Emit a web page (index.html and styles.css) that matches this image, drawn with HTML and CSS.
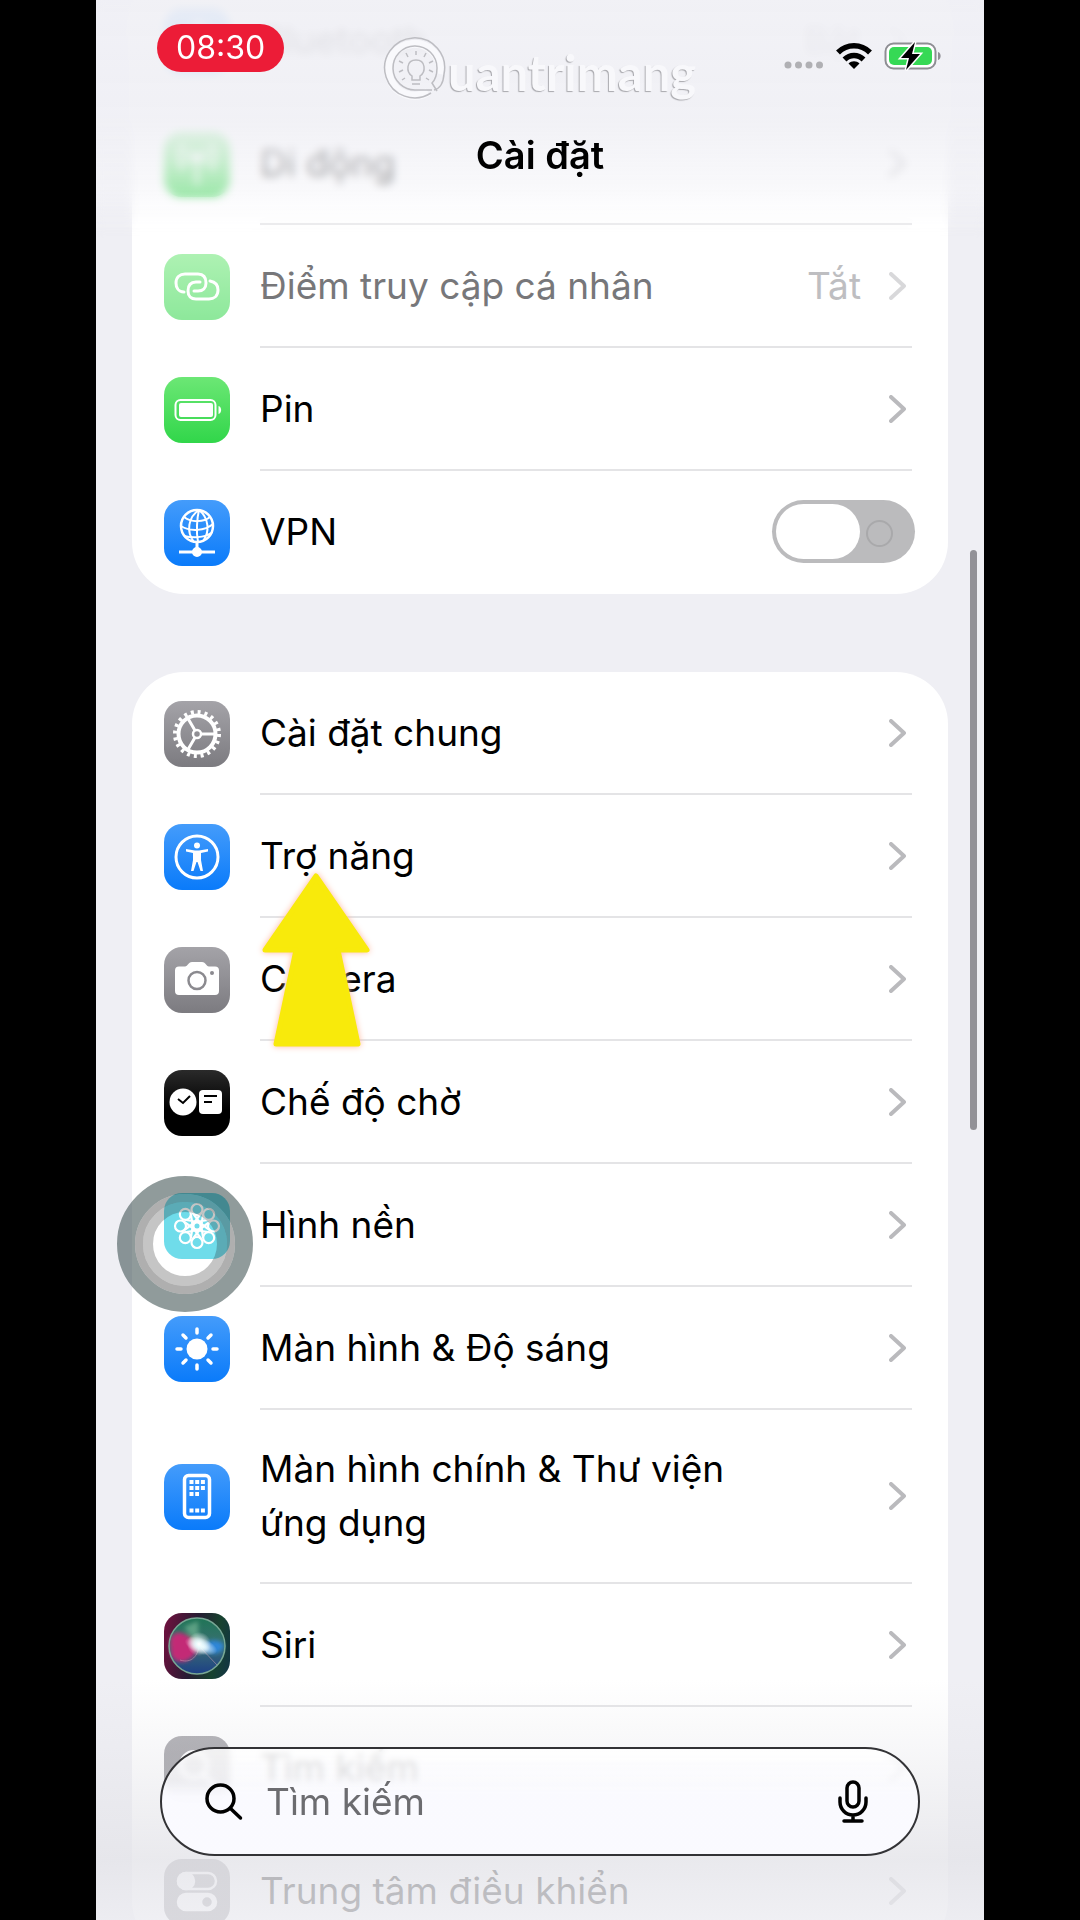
FILE: index.html
```html
<!DOCTYPE html>
<html lang="vi">
<head>
	<meta charset="utf-8">
	<meta name="viewport" content="width=device-width, initial-scale=1.0">
	<title>Cài đặt</title>
	<link rel="stylesheet" href="styles.css">
</head>
<body>
	<!-- shared shapes -->
	<svg class="defs" width="0" height="0" aria-hidden="true">
		<symbol id="chevron" viewBox="0 0 17 28">
			<path d="M2 2 L15 14 L2 26" fill="none" stroke="currentColor" stroke-width="4" stroke-linecap="round" stroke-linejoin="round"/>
		</symbol>
		<symbol id="petal" viewBox="0 0 66 66">
			<g fill="none" stroke="#fff" stroke-width="2.200" stroke-linecap="round"><circle cx="33" cy="16.500" r="5.500"/><path d="M29.500 21 L36 30 M36.500 21 L30 30"/></g>
		</symbol>
	</svg>

	<div class="screen">
		<header class="header">
			<div class="status-bar">
				<div class="time">08:30</div>
				<div class="status-icons">
					<svg class="dots" viewBox="0 0 40 8" fill="#b0b0b4"><circle cx="4" cy="4" r="3.500"/><circle cx="14.500" cy="4" r="3.500"/><circle cx="25" cy="4" r="3.500"/><circle cx="35.500" cy="4" r="3.500"/></svg>
					<svg class="wifi" viewBox="0 0 36 28">
						<g fill="none" stroke="#000" stroke-width="5.500">
							<path d="M2 10.500 C11 1.500 25 1.500 34 10.500"/>
							<path d="M8.500 17.500 C14 12 22 12 27.500 17.500"/>
						</g>
						<path d="M18 27 L12.500 21.500 C15.500 18.500 20.500 18.500 23.500 21.500 Z"/>
					</svg>
					<svg class="battery" viewBox="0 0 58 30">
						<rect x="1.500" y="2.500" width="50" height="25" rx="8" fill="#fff" stroke="#8e8e93" stroke-width="2"/>
						<rect x="5" y="6" width="43" height="18" rx="5" fill="#36d955"/>
						<path d="M54 11 C57.500 12 57.500 18 54 19 Z" fill="#8e8e93"/>
						<path d="M31 1 L17 17 H25 L22 29 L36 13 H28 Z" fill="#000" stroke="#fff" stroke-width="3" paint-order="stroke"/>
					</svg>
				</div>
			</div>
			<h1 class="title">Cài đặt</h1>
			<div class="watermark">
				<svg viewBox="0 0 66 66" fill="none">
					<g stroke="#f9f9fc" stroke-width="8"><path d="M58 38 A26 26 0 1 0 46 56"/></g>
					<g stroke="#bdbdc2" stroke-width="1.500">
						<path d="M49 57 A30 30 0 1 1 62 38 Q61 52 52 54"/>
						<path d="M50 54 H34 A22 22 0 1 1 55 32 Q55 42 50 47 L55 55"/>
						<path d="M30 44 V40 C24 36 24 24 34 24 C44 24 44 36 38 40 V44 Z M30 48 H38"/>
						<path d="M34 19 V15 M42 21 L44 17 M47 27 L51 25 M47 34 L51 36 M26 21 L24 17 M21 27 L17 25 M21 34 L17 36 M23 42 L20 44 M44 42 L47 44"/>
					</g>
				</svg>
				<span>uantrimang</span>
			</div>
		</header>

		<main class="content">
			<ul class="card">
				<li><a class="row" href="#">
					<svg class="icon blue" viewBox="0 0 66 66"><path d="M22 23 L44 43 L33 53 V13 L44 23 L22 43" fill="none" stroke="#fff" stroke-width="3"/></svg>
					<span class="row-body"><span class="label">Bluetooth</span><span class="value">Bật</span><svg class="chevron"><use href="#chevron"/></svg></span>
				</a></li>
				<li><a class="row" href="#">
					<svg class="icon green" viewBox="0 0 66 66" fill="none" stroke="#fff" stroke-width="3"><circle cx="33" cy="26" r="4" fill="#fff"/><path d="M33 28 V54 M25 34 A12 12 0 0 1 25 18 M41 34 A12 12 0 0 0 41 18 M19 39 A20 20 0 0 1 19 13 M47 39 A20 20 0 0 0 47 13"/></svg>
					<span class="row-body"><span class="label">Di động</span><svg class="chevron"><use href="#chevron"/></svg></span>
				</a></li>
				<li><a class="row disabled" href="#">
					<svg class="icon green" viewBox="0 0 66 66" fill="none" stroke="#fff" stroke-width="3" stroke-linecap="round">
						<path d="M20 38 C14 38 12 33 12 29 C12 23 16 20 21 20 H34 C39 20 42 23 42 29 C42 34 39 37 34 37 H30"/>
						<path d="M46 27 C52 28 54 32 54 36 C54 42 50 45 45 45 H32 C27 45 24 42 24 37 C24 31 27 28 32 28 H36"/>
					</svg>
					<span class="row-body"><span class="label">Điểm truy cập cá nhân</span><span class="value">Tắt</span><svg class="chevron"><use href="#chevron"/></svg></span>
				</a></li>
				<li><a class="row" href="#">
					<svg class="icon green" viewBox="0 0 66 66">
						<rect x="11.500" y="23" width="40" height="20" rx="5" fill="none" stroke="#fff" stroke-width="2"/>
						<rect x="15" y="26" width="34" height="14" rx="2" fill="#fff"/>
						<path d="M54.500 29 C58 30 58 36 54.500 37 Z" fill="#fff"/>
					</svg>
					<span class="row-body"><span class="label">Pin</span><svg class="chevron"><use href="#chevron"/></svg></span>
				</a></li>
				<li><label class="row">
					<svg class="icon blue" viewBox="0 0 66 66" fill="none" stroke="#fff" stroke-width="2">
						<circle cx="33" cy="26" r="16" stroke-width="2.500"/>
						<path d="M35 10 C24 17 22 32 30 42 M35 10 C33 18 32 32 34 42 M35 10 C45 18 46 32 39 41 M20 17 C28 23 40 22 46 17 M17 26 C26 32 41 31 49 24 M20 36 C28 38 40 38 47 33"/>
						<path d="M33 42 V52 M15 52 H51" stroke-width="3"/>
						<circle cx="33" cy="52" r="4" fill="#fff"/>
					</svg>
					<span class="row-body"><span class="label">VPN</span><input class="switch" type="checkbox" role="switch"></span>
				</label></li>
			</ul>

			<ul class="card">
				<li><a class="row" href="#">
					<svg class="icon gray" viewBox="0 0 66 66" fill="none" stroke="#fff">
						<circle cx="33" cy="33" r="18.500" stroke-width="4"/>
						<circle cx="33" cy="33" r="22" stroke-width="4" stroke-dasharray="3 3.911"/>
						<circle cx="33" cy="33" r="4" stroke-width="2.500"/>
						<path d="M37 33 H51 M31 29.500 L24 17.500 M31 36.500 L24 48.500" stroke-width="3"/>
					</svg>
					<span class="row-body"><span class="label">Cài đặt chung</span><svg class="chevron"><use href="#chevron"/></svg></span>
				</a></li>
				<li><a class="row" href="#">
					<svg class="icon blue" viewBox="0 0 66 66">
						<circle cx="33" cy="33" r="21" fill="none" stroke="#fff" stroke-width="3"/>
						<circle cx="33" cy="21.500" r="3" fill="#fff"/>
						<path d="M22 25 L31 26.500 H35 L44 25 V27.500 L37 29 V36 L39 47 H36.500 L33.500 38 H32.500 L29.500 47 H27 L29 36 V29 L22 27.500 Z" fill="#fff"/>
					</svg>
					<span class="row-body"><span class="label">Trợ năng</span><svg class="chevron"><use href="#chevron"/></svg></span>
				</a>
					<svg class="pointer" viewBox="0 0 120 184"><path d="M60 6 L111 80 H82 L102 174 H20 L40 80 H9 Z" fill="#f8ea0b" stroke="#f8ea0b" stroke-width="5" stroke-linejoin="round"/></svg>
				</li>
				<li><a class="row" href="#">
					<svg class="icon gray" viewBox="0 0 66 66">
						<path d="M15 19.500 H21 C24 19.500 24 15 28 15 H38 C42 15 42 19.500 45 19.500 H51 Q55 19.500 55 23.500 V44 Q55 48 51 48 H15 Q11 48 11 44 V23.500 Q11 19.500 15 19.500 Z" fill="#fff"/>
						<circle cx="33" cy="33.500" r="8.500" fill="none" stroke="#8b8a8f" stroke-width="2.500"/>
						<circle cx="48" cy="26" r="2" fill="#8b8a8f"/>
					</svg>
					<span class="row-body"><span class="label">Camera</span><svg class="chevron"><use href="#chevron"/></svg></span>
				</a></li>
				<li><a class="row" href="#">
					<svg class="icon black" viewBox="0 0 66 66">
						<circle cx="19" cy="32" r="13.500" fill="#fff"/>
						<rect x="35" y="20" width="23" height="24" rx="4" fill="#fff"/>
						<path d="M14 29 L19 33 L26 26 M40 26 H53 M40 32 H48" fill="none" stroke="#000" stroke-width="2"/>
					</svg>
					<span class="row-body"><span class="label">Chế độ chờ</span><svg class="chevron"><use href="#chevron"/></svg></span>
				</a></li>
				<li><a class="row" href="#">
					<svg class="icon cyan" viewBox="0 0 66 66">
						<use href="#petal"/>
						<use href="#petal" transform="rotate(45 33 33)"/>
						<use href="#petal" transform="rotate(90 33 33)"/>
						<use href="#petal" transform="rotate(135 33 33)"/>
						<use href="#petal" transform="rotate(180 33 33)"/>
						<use href="#petal" transform="rotate(225 33 33)"/>
						<use href="#petal" transform="rotate(270 33 33)"/>
						<use href="#petal" transform="rotate(315 33 33)"/>
						<circle cx="33" cy="33" r="3.500" fill="#5fd8e8" stroke="#fff" stroke-width="2"/>
					</svg>
					<span class="row-body"><span class="label">Hình nền</span><svg class="chevron"><use href="#chevron"/></svg></span>
				</a></li>
				<li><a class="row" href="#">
					<svg class="icon blue" viewBox="0 0 66 66">
						<circle cx="33" cy="33" r="10.500" fill="#fff"/>
						<path d="M33 13 V17 M33 49 V53 M13 33 H17 M49 33 H53 M19 19 L22 22 M44 44 L47 47 M19 47 L22 44 M44 22 L47 19" stroke="#fff" stroke-width="3.500" stroke-linecap="round"/>
					</svg>
					<span class="row-body"><span class="label">Màn hình &amp; Độ sáng</span><svg class="chevron"><use href="#chevron"/></svg></span>
				</a></li>
				<li><a class="row" href="#">
					<svg class="icon blue" viewBox="0 0 66 66">
						<rect x="20.500" y="11.500" width="25" height="42" rx="4" fill="none" stroke="#fff" stroke-width="3.500"/>
						<path d="M25.500 18 H41 M25.500 24 H41 M25.500 30 H35 M25.500 46.500 H41" stroke="#fff" stroke-width="4" stroke-dasharray="4 1.700"/>
					</svg>
					<span class="row-body"><span class="label">Màn hình chính &amp; Thư viện<br>ứng dụng</span><svg class="chevron"><use href="#chevron"/></svg></span>
				</a></li>
				<li><a class="row" href="#">
					<svg class="icon siri" viewBox="0 0 66 66">
						<defs>
							<radialGradient id="glow"><stop offset="0" stop-color="#fff"/><stop offset=".3" stop-color="#eafcff" stop-opacity=".8"/><stop offset="1" stop-color="#fff" stop-opacity="0"/></radialGradient>
							<linearGradient id="orb" x1="0" y1="0" x2="0" y2="1"><stop offset="0" stop-color="#1f7556"/><stop offset=".5" stop-color="#3b6f72"/><stop offset="1" stop-color="#1c3f86"/></linearGradient>
							<filter id="soft"><feGaussianBlur stdDeviation="2"/></filter>
						</defs>
						<circle cx="33" cy="33" r="28" fill="url(#orb)"/>
						<g filter="url(#soft)">
							<path d="M6 26 C12 14 24 20 35 33 C30 50 12 54 7 42 Z" fill="#c32c76"/>
							<path d="M35 34 C44 25 58 26 60 33 C57 43 46 43 35 34 Z" fill="#2f86d8"/>
							<path d="M20 14 L35 33 L34 8" fill="#6fb392" opacity=".7"/>
						</g>
						<circle cx="33" cy="33" r="28" fill="none" stroke="#78a795" stroke-width="1.500"/>
						<path d="M16 47 C28 51 34 42 35 33 L53 52" fill="none" stroke="#d4a8b8" opacity=".5"/>
						<ellipse cx="37" cy="33" rx="17" ry="8" fill="url(#glow)" transform="rotate(20 37 33)"/>
						<circle cx="35" cy="31" r="12" fill="url(#glow)"/>
					</svg>
					<span class="row-body"><span class="label">Siri</span><svg class="chevron"><use href="#chevron"/></svg></span>
				</a></li>
				<li><a class="row" href="#">
					<svg class="icon gray" viewBox="0 0 66 66" fill="none" stroke="#fff" stroke-width="4"><circle cx="30" cy="29" r="13"/><path d="M40 39 L51 50"/></svg>
					<span class="row-body"><span class="label">Tìm kiếm</span><svg class="chevron"><use href="#chevron"/></svg></span>
				</a></li>
				<li><a class="row" href="#">
					<svg class="icon gray" viewBox="0 0 66 66" fill="none" stroke="#fff" stroke-width="2.500">
						<rect x="14" y="14" width="38" height="16" rx="8"/><circle cx="22" cy="22" r="8" fill="#fff"/>
						<rect x="14" y="35" width="38" height="16" rx="8" fill="#fff"/><circle cx="43" cy="43" r="6" fill="#8b8a8f"/>
					</svg>
					<span class="row-body"><span class="label">Trung tâm điều khiển</span><svg class="chevron"><use href="#chevron"/></svg></span>
				</a></li>
			</ul>
		</main>

		<div class="scrollbar"></div>

		<button class="assistive" type="button" aria-label="AssistiveTouch">
			<svg viewBox="0 0 136 136" fill="none">
				<circle cx="68" cy="68" r="59" stroke="#2b4040" stroke-opacity=".52" stroke-width="18"/>
				<circle cx="68" cy="68" r="46" stroke="#555" stroke-opacity=".47" stroke-width="8"/>
				<circle cx="68" cy="68" r="37" stroke="#555" stroke-opacity=".34" stroke-width="10"/>
				<circle cx="68" cy="68" r="32" fill="#fff" fill-opacity=".1"/>
			</svg>
		</button>

		<div class="bottom-bar">
			<form class="search">
				<svg class="search-icon" viewBox="0 0 38 38" fill="none" stroke="#000" stroke-width="3.500" stroke-linecap="round"><circle cx="15.500" cy="15.500" r="13.500"/><path d="M25.500 25.500 L35.500 35"/></svg>
				<input class="search-input" type="text" placeholder="Tìm kiếm" aria-label="Tìm kiếm">
				<button class="mic" type="button" aria-label="Đọc chính tả">
					<svg viewBox="0 0 30 44" fill="none" stroke="#000" stroke-width="3.500" stroke-linecap="round"><rect x="9" y="2" width="12" height="25" rx="6"/><path d="M2 18 V22 A13 13 0 0 0 28 22 V18 M15 35 V41 M6 41 H24"/></svg>
				</button>
			</form>
		</div>
	</div>
</body>
</html>
```

FILE: styles.css
```css
* {
	box-sizing: border-box;
	margin: 0;
	padding: 0;
}
body {
	padding: 0 96px;
	background: #000;
	font-family: Inter, "Noto Sans", sans-serif;
	font-size: 37px;
	line-height: 54px;
	color: #000;
}
.defs {
	display: block;
}
.screen {
	position: relative;
	height: 100vh;
	overflow: hidden;
	background: #efeff4;
}

/* header lies over the scrolled list */
.header {
	position: absolute;
	top: 0;
	left: 0;
	right: 0;
	z-index: 2;
	padding: 24px 0 56px;
}
.header::before {
	content: "";
	position: absolute;
	inset: 0;
	z-index: -1;
	background: linear-gradient(rgba(240,240,245,.94) 0, rgba(240,240,245,.92) 50%, rgba(244,244,248,.6) 78%, rgba(252,252,254,.2) 100%);
	backdrop-filter: blur(4px);
	mask-image: linear-gradient(#000 80%, transparent);
}
.status-bar {
	display: flex;
	justify-content: space-between;
	align-items: flex-start;
	padding: 0 42px 0 61px;
}
.time {
	padding: 0 19px;
	border-radius: 24px;
	background: #ec1c37;
	color: #fff;
	font-size: 32px;
	line-height: 48px;
}
.status-icons {
	display: flex;
	align-items: center;
	gap: 12px;
	padding-top: 17px;
}
.dots {
	width: 40px;
	height: 8px;
	margin-top: 18px;
}
.wifi {
	width: 36px;
	height: 28px;
}
.battery {
	width: 58px;
	height: 30px;
}
.title {
	margin-top: 56px;
	font-size: 38px;
	line-height: 54px;
	font-weight: 600;
	text-align: center;
}
.watermark {
	position: absolute;
	top: 36px;
	left: 286px;
	display: flex;
	align-items: flex-end;
	color: #f8f8fb;
	font-family: Lato, sans-serif;
	font-size: 49px;
	line-height: 60px;
	font-weight: 700;
	text-shadow: -1px 1px 1px #a8a8ad;
}
.watermark svg {
	width: 66px;
	height: 66px;
}

.content {
	display: flex;
	flex-direction: column;
	gap: 78px;
	margin-top: -21px;
	padding: 0 36px;
}
.card {
	border-radius: 52px;
	background: #fff;
	list-style: none;
}
.card li {
	position: relative;
}
.row {
	display: flex;
	align-items: center;
	gap: 30px;
	padding: 0 36px 0 32px;
	color: inherit;
	text-decoration: none;
}
.row-body {
	flex: auto;
	display: flex;
	align-items: center;
	min-height: 123px;
	padding-right: 6px;
	border-bottom: 2px solid #e4e4e6;
}
li:last-child .row-body {
	border-color: transparent;
}
.label {
	flex: auto;
	padding: 32px 0;
}
.value {
	margin-right: 28px;
	color: #85858a;
}
.chevron {
	flex: none;
	width: 17px;
	height: 28px;
	color: #bababd;
}
.disabled .icon,
.disabled .chevron {
	opacity: .55;
}
.disabled .label {
	color: #77777a;
}
.disabled .value {
	color: #bebec1;
}

.icon {
	flex: none;
	width: 66px;
	height: 66px;
	border-radius: 18px;
}
.blue {
	background: linear-gradient(#449cfb, #0a7bfa);
}
.green {
	background: linear-gradient(#6ce775, #31d64a);
}
.gray {
	background: linear-gradient(#a4a3a8, #7c7b80);
}
.black {
	background: linear-gradient(#2a2a2a, #000 60%);
}
.cyan {
	background: #5fd8e8;
}
.siri {
	background: linear-gradient(100deg, #73103f, #271c33 45%, #17422f 75%, #123346);
}

.switch {
	appearance: none;
	position: relative;
	flex: none;
	width: 143px;
	height: 63px;
	margin-right: -9px;
	border-radius: 32px;
	background: #bbbbbd;
}
.switch::before {
	content: "";
	position: absolute;
	top: 4px;
	left: 4px;
	width: 84px;
	height: 55px;
	border-radius: 28px;
	background: #fff;
}
.switch::after {
	content: "";
	position: absolute;
	top: 20px;
	right: 22px;
	width: 23px;
	height: 23px;
	border: 2px solid #a9a9ab;
	border-radius: 50%;
}

/* things floating over the list */
.pointer {
	position: absolute;
	top: 75px;
	left: 124px;
	z-index: 1;
	width: 120px;
	height: 184px;
	filter: drop-shadow(0 0 3px #ffb9a0);
}
.scrollbar {
	position: absolute;
	top: 550px;
	right: 7px;
	width: 7px;
	height: 580px;
	border-radius: 4px;
	background: #929197;
}
.assistive {
	position: absolute;
	top: 1176px;
	left: 21px;
	width: 136px;
	height: 136px;
	border: 0;
	border-radius: 50%;
	background: none;
}
.assistive svg {
	display: block;
}

.bottom-bar {
	position: absolute;
	left: 0;
	right: 0;
	bottom: 0;
	padding: 67px 64px 64px;
	background: linear-gradient(rgba(228,228,233,0) 0, rgba(228,228,233,.3) 30%, rgba(228,228,233,.8) 75%, rgba(236,236,241,.82) 100%);
}
.search {
	display: flex;
	align-items: center;
	height: 109px;
	padding: 0 50px 0 43px;
	border: 2px solid #333336;
	border-radius: 55px;
	background: linear-gradient(rgba(255,255,255,.82), rgba(252,252,255,.8) 30%, rgba(250,250,255,.98) 45%);
	backdrop-filter: blur(3px);
}
.search-icon {
	flex: none;
	width: 38px;
	height: 38px;
}
.search-input {
	flex: auto;
	min-width: 0;
	margin-left: 23px;
	border: 0;
	outline: 0;
	background: none;
	font: inherit;
}
.search-input::placeholder {
	color: #6c6c70;
	opacity: 1;
}
.mic {
	border: 0;
	background: none;
}
.mic svg {
	display: block;
	width: 30px;
	height: 44px;
}
```
